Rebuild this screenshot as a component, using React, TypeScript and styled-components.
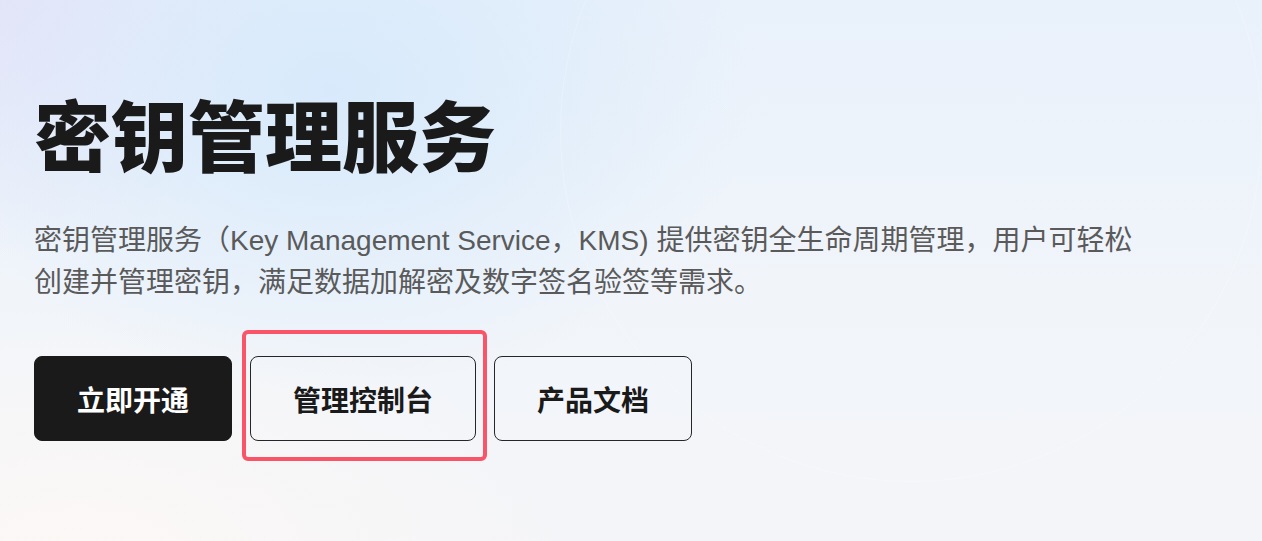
import styled, { createGlobalStyle } from 'styled-components'

const GlobalStyle = createGlobalStyle`
  html, body {
    margin: 0;
    padding: 0;
  }
  body {
    font-family: "Liberation Sans", "Noto Sans CJK SC", sans-serif;
  }
`

const Hero = styled.section`
  position: relative;
  box-sizing: border-box;
  width: 100%;
  min-height: 541px;
  padding: 87px 34px 0;
  overflow: hidden;
  background:
    radial-gradient(ellipse 420px 300px at 330px 90px, rgba(214, 233, 251, 0.95), rgba(214, 233, 251, 0) 100%),
    radial-gradient(ellipse 300px 260px at 0px 0px, rgba(229, 226, 248, 0.9), rgba(229, 226, 248, 0) 100%),
    radial-gradient(ellipse 500px 260px at 80px 560px, rgba(252, 248, 246, 1), rgba(252, 248, 246, 0) 100%),
    linear-gradient(180deg, #e9f1fb 0%, #f1f5fa 55%, #f4f5f8 100%);
`

const Rings = styled.div`
  position: absolute;
  left: 560px;
  top: -220px;
  width: 700px;
  height: 700px;
  border-radius: 50%;
  border: 1px solid rgba(255, 255, 255, 0.22);
  pointer-events: none;
`

const Content = styled.div`
  position: relative;
  display: flex;
  flex-direction: column;
  align-items: flex-start;
`

const Title = styled.h1`
  margin: 0;
  font-family: "Noto Sans CJK SC", sans-serif;
  font-size: 77px;
  line-height: 91px;
  font-weight: 900;
  color: #1a1a1a;
`

const Description = styled.p`
  margin: 42px 0 0;
  max-width: 1115px;
  font-size: 28px;
  line-height: 42px;
  color: #5a5a5a;
`

const Actions = styled.div`
  display: flex;
  align-items: center;
  gap: 18px;
  margin-top: 52px;
`

const Button = styled.button<{ $primary?: boolean }>`
  box-sizing: border-box;
  height: 85px;
  padding: 0 42px;
  border-radius: 8px;
  border: 1px solid ${(p) => (p.$primary ? '#1a1a1a' : '#262626')};
  background: ${(p) => (p.$primary ? '#1a1a1a' : 'transparent')};
  color: ${(p) => (p.$primary ? '#ffffff' : '#1a1a1a')};
  font-family: "Noto Sans CJK SC", sans-serif;
  font-size: 28px;
  font-weight: 700;
  cursor: pointer;
  white-space: nowrap;
`

const Highlighted = styled.div`
  position: relative;
  display: flex;
`

const HighlightFrame = styled.span`
  position: absolute;
  top: -26px;
  left: -8px;
  right: -11px;
  bottom: -20px;
  border: 4px solid #fa5468;
  border-radius: 6px;
  pointer-events: none;
`

export default function App() {
  return (
    <>
      <GlobalStyle />
      <Hero>
        <Rings />
        <Content>
          <Title>密钥管理服务</Title>
          <Description>
            密钥管理服务（Key Management Service，KMS) 提供密钥全生命周期管理，用户可轻松创建并管理密钥，满足数据加解密及数字签名验签等需求。
          </Description>
          <Actions>
            <Button $primary>立即开通</Button>
            <Highlighted>
              <Button>管理控制台</Button>
              <HighlightFrame />
            </Highlighted>
            <Button>产品文档</Button>
          </Actions>
        </Content>
      </Hero>
    </>
  )
}
